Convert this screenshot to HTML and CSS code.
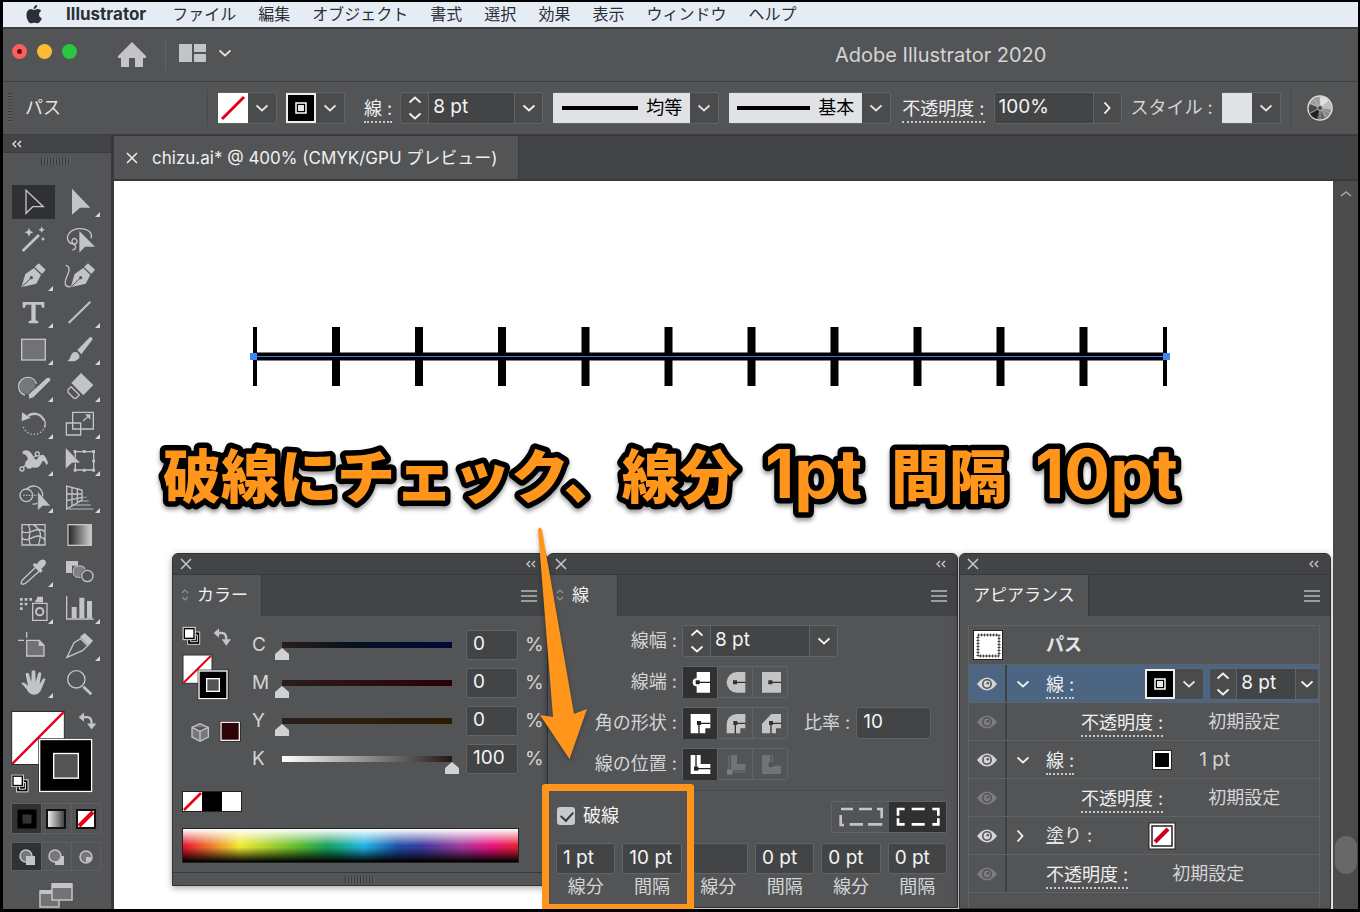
FILE: index.html
```html
<!DOCTYPE html>
<html lang="ja">
<head>
<meta charset="utf-8">
<title>Adobe Illustrator 2020</title>
<link rel="stylesheet" href="styles.css">
</head>
<body>
<svg class="defs" aria-hidden="true">
  <defs>
    <linearGradient id="fade"><stop offset="0" stop-color="#222"/><stop offset="1" stop-color="#d0d0d0"/></linearGradient>
    <linearGradient id="fade-light"><stop offset="0" stop-color="#f4f4f4"/><stop offset="1" stop-color="#3a3a3a"/></linearGradient>
    <symbol id="down" viewBox="0 0 12 8"><path d="M.5 1.500L6 6.500L11.500 1.500" fill="none" stroke="currentColor" stroke-width="1.800"/></symbol>
    <symbol id="right" viewBox="0 0 8 12"><path d="M1.500 .5L6.500 6L1.500 11.500" fill="none" stroke="currentColor" stroke-width="1.800"/></symbol>
    <symbol id="steps" viewBox="0 0 14 24"><path d="M1.500 6.500L7 1.500L12.500 6.500M1.500 17.500L7 22.500L12.500 17.500" fill="none" stroke="currentColor" stroke-width="1.800"/></symbol>
    <symbol id="close" viewBox="0 0 12 12"><path d="M1 1L11 11M11 1L1 11" fill="none" stroke="currentColor" stroke-width="1.5"/></symbol>
    <symbol id="collapse" viewBox="0 0 10 8"><path d="M4 1L1 4L4 7M9 1L6 4L9 7" fill="none" stroke="currentColor" stroke-width="1.4"/></symbol>
    <symbol id="lines" viewBox="0 0 16 12"><path d="M0 1H16M0 6H16M0 11H16" stroke="currentColor" stroke-width="1.6"/></symbol>
    <symbol id="updown" viewBox="0 0 8 12"><path d="M1 4L4 1L7 4M1 8L4 11L7 8" fill="none" stroke="currentColor" stroke-width="1.2"/></symbol>
    <symbol id="eye" viewBox="0 0 20 14"><path d="M0 7Q10 -6 20 7Q10 20 0 7Z" fill="currentColor"/><circle cx="10" cy="7" r="5" fill="#535456"/><circle cx="10" cy="7" r="3.4" fill="currentColor"/><circle cx="10.800" cy="6.200" r="1.300" fill="#535456"/></symbol>
    <symbol id="swatch-none" viewBox="0 0 30 30"><rect width="30" height="30" fill="#fff"/><path d="M4 26L26 4" stroke="#e60012" stroke-width="3"/></symbol>
    <symbol id="swatch-line" viewBox="0 0 30 30"><rect x="1" y="1" width="28" height="28" fill="#000" stroke="#eee" stroke-width="2"/><rect x="10" y="10" width="10" height="10" fill="#000" stroke="#fff" stroke-width="1.500"/><rect x="12" y="12" width="6" height="6" fill="#e8e8e8"/></symbol>
  </defs>
</svg>

<div class="app">
  <nav class="menubar">
    <svg class="apple" viewBox="0 0 48 58"><path d="M24 15C29 15 31 12 36 12C41 12 44 15 46 18C36 24 38 37 48 40C46 48 40 56 35 56C31 56 29 54 25 54C21 54 19 56 15 56C9 56 1 43 1 31C1 19 8 13 14 13C18 13 21 15 24 15ZM23 12C22 6 27 0 34 0C34 7 29 12 23 12Z" fill="#2c2f36"/></svg>
    <b>Illustrator</b>
    <span>ファイル</span><span>編集</span><span>オブジェクト</span><span>書式</span><span>選択</span><span>効果</span><span>表示</span><span>ウィンドウ</span><span>ヘルプ</span>
  </nav>

  <header class="titlebar">
    <div class="lights"><i class="red"></i><i class="yellow"></i><i class="green"></i></div>
    <button class="home" aria-label="ホーム"><svg width="28" height="26" viewBox="0 0 28 26"><path d="M14 0L28 14V16H25V25H17V16H11V25H3V16H0V14Z" fill="#c3c4c6"/></svg></button>
    <button class="arrange" aria-label="ドキュメントレイアウト"><svg width="27" height="18" viewBox="0 0 27 18"><path d="M0 0H13V18H0ZM15 0H27V8H15ZM15 10H27V18H15Z" fill="#c3c4c6"/></svg><svg width="12" height="8"><use href="#down"/></svg></button>
    <h1>Adobe Illustrator 2020</h1>
  </header>

  <div class="controlbar">
    <i class="grip-v"></i>
    <span class="object">パス</span>
    <i class="rule"></i>
    <button class="swatch-dd" aria-label="塗り"><svg width="30" height="30"><use href="#swatch-none"/></svg><span><svg width="12" height="8"><use href="#down"/></svg></span></button>
    <button class="swatch-dd second" aria-label="線"><svg width="30" height="30"><use href="#swatch-line"/></svg><span><svg width="12" height="8"><use href="#down"/></svg></span></button>
    <label class="dotted stroke-label" for="bar-stroke">線 :</label>
    <div class="combo bar-width"><button aria-label="増減"><svg width="14" height="24"><use href="#steps"/></svg></button><input id="bar-stroke" value="8 pt"><button aria-label="線幅の一覧"><svg width="12" height="8"><use href="#down"/></svg></button></div>
    <div class="profile wide"><div class="light"><i></i><select aria-label="可変線幅プロファイル"><option>均等</option></select></div><span><svg width="12" height="8"><use href="#down"/></svg></span></div>
    <div class="profile"><div class="light"><i></i><select aria-label="ブラシ定義"><option>基本</option></select></div><span><svg width="12" height="8"><use href="#down"/></svg></span></div>
    <label class="dotted opacity-label" for="bar-opacity">不透明度 :</label>
    <div class="combo bar-opacity"><input id="bar-opacity" value="100%"><button aria-label="不透明度の一覧"><svg width="8" height="12"><use href="#right"/></svg></button></div>
    <span class="style-label">スタイル :</span>
    <button class="swatch-dd" aria-label="スタイル"><svg width="30" height="30"><rect width="30" height="30" fill="#e1e2e5"/></svg><span><svg width="12" height="8"><use href="#down"/></svg></span></button>
    <i class="rule style-rule"></i>
    <button class="recolor" aria-label="オブジェクトを再配色"><svg width="26" height="26" viewBox="0 0 26 26"><circle cx="13" cy="13" r="12" fill="#969696" stroke="#ddd" stroke-width="1.500"/><path d="M13 13L13 2A11 11 0 0 1 22 6Z" fill="#e0e0e0"/><path d="M13 13L22 6A11 11 0 0 1 24 15Z" fill="#bcbcbc"/><path d="M13 13L24 15A11 11 0 0 1 18 23Z" fill="#8a8a8a"/><path d="M13 13L18 23A11 11 0 0 1 10 24Z" fill="#626262"/><path d="M13 13L10 24A11 11 0 0 1 3 19Z" fill="#222"/><path d="M13 13L3 19A11 11 0 0 1 3 9Z" fill="#484848"/><path d="M13 13L3 9A11 11 0 0 1 13 2Z" fill="#9c9c9c"/><path d="M13 2V24M3 8L23 18M3 18L23 8M7 4L19 22" stroke="#c8c8c8" stroke-width=".6"/><circle cx="13" cy="13" r="2.500" fill="#444" stroke="#bbb"/></svg></button>
  </div>

  <div class="main">
    <aside class="toolbar">
      <div class="tool-head"><svg width="10" height="8"><use href="#collapse"/></svg></div>
      <i class="grip-h"></i>
      <div class="tools">
        <button class="on" aria-label="選択"><svg viewBox="30 161 138 111"><path class="l" d="M78 183V252L98 232H130Z"/></svg></button>
        <button class="more" aria-label="ダイレクト選択"><svg viewBox="171 161 138 111"><path class="f" d="M216 178V256L240 235H271Z"/></svg></button>
        <button aria-label="自動選択"><svg viewBox="30 271 138 111"><path class="l" stroke-width="8" d="M68 364L117 316"/><path class="f" d="M87 294L91 304L100 308L91 312L87 321L83 312L74 308L83 304ZM125 290L128 297L135 300L128 303L125 310L122 303L115 300L122 297ZM129 321L131 326L136 328L131 330L129 335L127 330L122 328L127 326Z"/></svg></button>
        <button aria-label="なげなわ"><svg viewBox="171 271 138 111"><path class="l" d="M273 326C280 306 258 295 235 297C210 300 198 318 204 332C210 346 230 348 231 335C231 323 215 324 216 336C217 345 229 344 227 353C226 359 220 361 217 360"/><path class="f" d="M238 304V369L255 351H285Z"/></svg></button>
        <button class="more" aria-label="ペン"><svg viewBox="30 382 138 111"><path class="f" d="M64 473L76 433L102 415L123 436L109 462Z"/><path class="f" d="M104 412L116 401L137 420L126 433Z"/><path class="k" d="M66 471L92 446"/><circle cx="94" cy="444" r="5" fill="#535456"/></svg></button>
        <button aria-label="曲線"><svg viewBox="171 382 138 111"><path class="f" d="M212 473L224 433L250 415L271 436L257 462Z"/><path class="f" d="M252 412L264 401L285 420L274 433Z"/><path class="k" d="M214 471L240 446"/><circle cx="242" cy="444" r="5" fill="#535456"/><path class="l" d="M197 407C214 410 206 430 200 442C192 461 194 473 212 471"/></svg></button>
        <button class="more" aria-label="文字"><svg viewBox="30 492 138 111"><path class="f" d="M68 516H133V533H126L123 524H107V571L115 574V580H86V574L94 571V524H78L75 533H68Z"/></svg></button>
        <button class="more" aria-label="直線"><svg viewBox="171 492 138 111"><path class="l" stroke-width="6" d="M206 579L271 515"/></svg></button>
        <button class="more" aria-label="長方形"><svg viewBox="30 603 138 111"><rect class="g" x="65" y="628" width="71" height="62"/></svg></button>
        <button class="more" aria-label="ブラシ"><svg viewBox="171 603 138 111"><path class="f" d="M232 660L267 624Q278 616 277 629L244 673ZM228 666Q241 672 238 683Q230 697 202 693Q211 688 213 676Q218 664 228 666Z"/></svg></button>
        <button class="more" aria-label="Shaper"><svg viewBox="30 713 138 111"><circle cx="82" cy="767" r="23" fill="#77787a"/><path class="l" d="M75 794A27 27 0 1 1 109 761"/><path class="f" stroke="#535456" stroke-width="3" d="M87 807L84 793L140 742Q151 738 153 750L100 802Z"/></svg></button>
        <button class="more" aria-label="消しゴム"><svg viewBox="171 713 138 111"><path class="f" d="M243 728L280 764L250 795L214 758Z"/><path class="l" d="M213 769L238 794L228 804H222L204 786V778Z"/></svg></button>
        <button class="more" aria-label="回転"><svg viewBox="30 14 138 111"><path class="l" stroke-width="7" d="M84 46C104 34 124 42 132 60"/><path class="l" d="M130 54Q140 68 133 82"/><path class="f" d="M66 36L92 52L65 63Z"/><path class="l" stroke-dasharray="4 6" d="M70 80A34 34 0 0 0 132 84"/></svg></button>
        <button class="more" aria-label="拡大・縮小"><svg viewBox="171 14 138 111"><path class="l" d="M199 68H242V104H199ZM218 36H280V86H218Z"/><path class="l" d="M249 62L266 47"/><path class="f" d="M255 42H271V58Z"/></svg></button>
        <button class="more" aria-label="線幅"><svg viewBox="30 124 138 111"><path class="f" d="M68 152Q88 140 100 168Q108 186 116 168Q134 150 144 188L140 194Q130 172 124 188Q116 206 98 200Q84 210 78 198Q70 186 84 176Q80 160 68 160Z"/><path class="k" d="M74 197L106 166"/><path class="l" stroke-width="3" d="M70 200L108 164"/><circle class="l" cx="66" cy="205" r="6"/><circle class="l" cx="112" cy="160" r="6"/></svg></button>
        <button class="more" aria-label="自由変形"><svg viewBox="171 124 138 111"><path class="l" d="M226 153H281V208H226Z"/><path class="f" d="M249 148H257V157H249ZM277 148H285V157H277ZM277 177H285V185H277ZM277 204H285V213H277ZM249 204H257V213H249ZM221 204H229V213H221ZM221 148H229V157H221Z"/><path class="f" stroke="#535456" stroke-width="2" d="M196 140V206L216 187H242Z"/></svg></button>
        <button class="more" aria-label="シェイプ形成"><svg viewBox="30 235 138 111"><circle class="l" cx="79" cy="284" r="19"/><path class="l" d="M80 266A27 27 0 1 1 98 310"/><path class="l" stroke-dasharray="4 4" d="M70 284H112"/><path class="f" stroke="#535456" stroke-width="2" d="M113 272V330L128 316H152Z"/></svg></button>
        <button class="more" aria-label="遠近グリッド"><svg viewBox="171 235 138 111"><path class="l" d="M200 256V325L246 298V268ZM200 280L246 280M200 300L246 290M216 260V316M232 264V306"/><path class="l" opacity=".6" stroke-width="3" d="M244 290H260M236 301H266M222 313H272M206 325H280"/></svg></button>
        <button aria-label="メッシュ"><svg viewBox="30 345 138 111"><path class="l" d="M66 371H135V432H66ZM66 392C86 406 110 372 135 392M66 412C90 430 108 384 135 418M84 371C100 392 78 410 92 432M100 371C134 394 118 412 116 432"/></svg></button>
        <button aria-label="グラデーション"><svg viewBox="171 345 138 111"><rect x="204" y="371" width="70" height="62" fill="url(#fade)" stroke="#c3c4c6" stroke-width="4"/></svg></button>
        <button class="more" aria-label="スポイト"><svg viewBox="30 456 138 111"><path class="l" d="M107 499L68 536Q60 548 66 549Q72 552 84 541L119 509Z"/><path class="f" d="M98 492L104 486L110 490L118 480Q126 472 135 478Q142 488 132 496L124 504L128 509L121 516Z"/></svg></button>
        <button aria-label="ブレンド"><svg viewBox="171 456 138 111"><path class="f" d="M198 480H234V494H216V516H198Z"/><rect x="220" y="495" width="36" height="34" rx="13" fill="#808183" stroke="#c3c4c6" stroke-width="3"/><circle cx="262" cy="525" r="21" fill="#535456"/><circle class="l" cx="262" cy="525" r="17"/></svg></button>
        <button class="more" aria-label="シンボルスプレー"><svg viewBox="30 567 138 111"><path class="l" d="M98 607H141V658H98Z"/><circle class="l" stroke-width="6" cx="119" cy="632" r="11"/><path class="f" d="M106 604V598L111 594V587H129V604ZM60 591H68V599H60ZM74 591H82V599H74ZM88 591H96V599H88ZM60 605H68V613H60ZM74 605H82V613H74ZM60 619H68V627H60Z"/></svg></button>
        <button class="more" aria-label="棒グラフ"><svg viewBox="171 567 138 111"><path class="l" d="M200 586V654H281"/><path class="f" d="M215 618H230V652H215ZM238 590H253V652H238ZM261 600H276V652H261Z"/></svg></button>
        <button aria-label="アートボード"><svg viewBox="30 677 138 111"><path class="g" d="M80 717H118L132 732V764H80Z"/><path class="f" d="M116 717L133 734H116Z"/><path class="l" d="M54 717H72M80 692V709"/></svg></button>
        <button class="more" aria-label="スライス"><svg viewBox="171 677 138 111"><path class="l" d="M201 768L222 724L242 712L263 733L247 748Z"/><path class="f" d="M240 706L254 695L279 718L266 733Z"/></svg></button>
        <button class="more" aria-label="手のひら"><svg viewBox="30 788 138 111"><path class="f" d="M64 846Q70 840 78 848L84 854L77 818Q82 810 87 818L94 842L95 810Q101 803 106 810L107 842L115 814Q121 810 124 817L119 848L129 832Q136 828 136 835L122 868Q114 881 100 880Q86 878 80 864Z"/></svg></button>
        <button aria-label="ズーム"><svg viewBox="171 788 138 111"><circle class="l" cx="229" cy="834" r="26"/><path class="l" stroke-width="8" d="M250 856L274 879"/></svg></button>
      </div>
      <svg class="fillstroke" viewBox="24 235 282 260">
        <rect x="35" y="245" width="158" height="159" fill="#fff" stroke="#2c2d2f" stroke-width="3"/><path d="M37 402L191 247" stroke="#e60012" stroke-width="7"/>
        <rect x="115" y="325" width="163" height="163" fill="#2c2d2f"/><rect x="119" y="329" width="156" height="156" fill="#000" stroke="#fff" stroke-width="4"/><rect x="161" y="371" width="74" height="74" fill="#535456" stroke="#fff" stroke-width="4"/>
        <path d="M250 262H262Q275 262 275 282" fill="none" stroke="#c3c4c6" stroke-width="7"/><path class="f" d="M236 262L252 248V276ZM261 281H289L275 299Z"/>
        <rect x="50" y="450" width="34" height="36" fill="#000" stroke="#ddd" stroke-width="3"/><rect x="36" y="436" width="34" height="34" fill="#fff" stroke="#ddd" stroke-width="3"/><rect x="39" y="439" width="28" height="28" fill="#fff" stroke="#000" stroke-width="4"/><path d="M70 458H76V478H58V471" fill="none" stroke="#fff" stroke-width="3"/>
      </svg>
      <div class="modes">
        <button class="on" aria-label="カラー"><svg width="20" height="20"><rect x="3" y="3" width="14" height="14" fill="#333436" stroke="#000" stroke-width="5"/></svg></button>
        <button aria-label="グラデーション"><svg width="20" height="20"><rect x="1" y="1" width="18" height="18" fill="url(#fade-light)" stroke="#111" stroke-width="2"/></svg></button>
        <button aria-label="なし"><svg width="20" height="20"><rect x="1" y="1" width="18" height="18" fill="#fff" stroke="#111" stroke-width="2"/><path d="M3 17L17 3" stroke="#e60012" stroke-width="4"/></svg></button>
      </div>
      <div class="modes draw">
        <button class="on" aria-label="標準描画"><svg width="18" height="18"><circle cx="8" cy="8" r="6" fill="#77787a" stroke="#c3c4c6" stroke-width="1.500"/><path class="f" d="M8 8H17V17H8Z"/></svg></button>
        <button aria-label="背面描画"><svg width="18" height="18"><path class="f" d="M8 8H17V17H8Z"/><circle cx="8" cy="8" r="6" fill="#77787a" stroke="#c3c4c6" stroke-width="1.500"/></svg></button>
        <button aria-label="内側描画"><svg width="18" height="18"><circle cx="9" cy="9" r="6" fill="#77787a" stroke="#c3c4c6" stroke-width="1.500"/><path class="f" d="M9 9H14Q14 14 9 14Z"/></svg></button>
      </div>
      <button class="screen" aria-label="スクリーンモード"><svg width="34" height="26"><path d="M1 8H20V24H1Z" fill="#717274" stroke="#c3c4c6" stroke-width="1.500"/><path d="M1 7H20V11H1Z" fill="#c3c4c6"/><path d="M13 1H33V17H13Z" fill="#717274" stroke="#c3c4c6" stroke-width="1.500"/><path d="M13 0H33V5H13Z" fill="#c3c4c6"/></svg></button>
    </aside>

    <section class="document">
      <div class="tabs"><div class="tab"><button aria-label="閉じる"><svg width="12" height="12"><use href="#close"/></svg></button><span>chizu.ai* @ 400% (CMYK/GPU プレビュー)</span></div></div>
      <div class="view">
        <div class="canvas">
          <svg class="rail" width="920" height="60" viewBox="250 327 920 60">
            <path d="M255 356.500H1165" stroke="#000" stroke-width="8"/>
            <path d="M255 327V386M1165 327V386" stroke="#000" stroke-width="4"/>
            <path d="M336 327V386M419 327V386M502 327V386M585.500 327V386M668.500 327V386M751.500 327V386M834.500 327V386M917.500 327V386M1000.500 327V386M1083.500 327V386" stroke="#000" stroke-width="8"/>
            <path d="M255 356.500H1165" stroke="#3c78e6" stroke-width="1"/>
            <path d="M250 353H257V360H250ZM1163 353H1170V360H1163Z" fill="#4285f4"/>
          </svg>
          <svg class="caption" width="1040" height="90"><text x="6" y="61">破線にチェック、線分 <tspan class="latin" x="608">1pt</tspan> <tspan x="734">間隔</tspan> <tspan class="latin" x="878">10pt</tspan></text></svg>

          <section class="panel color">
            <div class="panel-head"><svg width="12" height="12"><use href="#close"/></svg><svg width="10" height="8"><use href="#collapse"/></svg></div>
            <div class="panel-tabs"><h2><svg width="8" height="12"><use href="#updown"/></svg>カラー</h2><button aria-label="メニュー"><svg width="16" height="12"><use href="#lines"/></svg></button></div>
            <div class="color-body">
              <div class="mixer">
                <svg width="60" height="120" viewBox="48 236 180 360">
                  <rect x="65" y="257" width="36" height="37" fill="#000" stroke="#ccc" stroke-width="3"/><rect x="51" y="243" width="37" height="37" fill="#fff" stroke="#ccc" stroke-width="3"/><rect x="55" y="247" width="29" height="29" fill="#fff" stroke="#000" stroke-width="4"/><path d="M88 266H94V286H74V280" fill="none" stroke="#ddd" stroke-width="3"/>
                  <path d="M156 260H168Q181 260 181 280" fill="none" stroke="#c3c4c6" stroke-width="7"/><path class="f" d="M143 260L159 246V274ZM167 279H195L181 298Z"/>
                  <rect x="51" y="326" width="87" height="85" fill="#fff" stroke="#2c2d2f" stroke-width="3"/><path d="M53 409L135 328" stroke="#e60012" stroke-width="6"/>
                  <rect x="95" y="370" width="93" height="91" fill="#222"/><rect x="99" y="374" width="84" height="83" fill="#000" stroke="#fff" stroke-width="4"/><rect x="122" y="397" width="38" height="38" fill="#535456" stroke="#fff" stroke-width="4"/>
                  <path d="M78 543L102 532L127 543V572L102 585L78 572ZM78 543L102 555L127 543M102 555V585" fill="#77787a" stroke="#c3c4c6" stroke-width="4"/>
                  <rect x="161" y="524" width="63" height="62" fill="#222"/><rect x="165" y="528" width="55" height="54" fill="#300406" stroke="#eee" stroke-width="4"/>
                </svg>
                <div class="sliders">
                  <label for="c">C</label><input class="c" type="range" id="c" value="0"><input aria-label="C の値" value="0"><span>%</span>
                  <label for="m">M</label><input class="m" type="range" id="m" value="0"><input aria-label="M の値" value="0"><span>%</span>
                  <label for="y">Y</label><input class="y" type="range" id="y" value="0"><input aria-label="Y の値" value="0"><span>%</span>
                  <label for="k">K</label><input class="k" type="range" id="k" value="100"><input aria-label="K の値" value="100"><span>%</span>
                </div>
              </div>
              <svg class="chips" width="60" height="21" viewBox="0 0 60 21"><rect x=".5" y=".5" width="59" height="20" fill="#fff" stroke="#222"/><path d="M2 19L19 2" stroke="#e60012" stroke-width="2.500"/><rect x="20" y="1" width="20" height="19" fill="#000"/></svg>
              <div class="spectrum"></div>
            </div>
            <div class="panel-foot"><i class="grip-h"></i></div>
          </section>

          <section class="panel stroke">
            <div class="panel-head"><svg width="12" height="12"><use href="#close"/></svg><svg width="10" height="8"><use href="#collapse"/></svg></div>
            <div class="panel-tabs"><h2><svg width="8" height="12"><use href="#updown"/></svg>線</h2><button aria-label="メニュー"><svg width="16" height="12"><use href="#lines"/></svg></button></div>
            <div class="stroke-body">
              <div class="row"><label for="weight">線幅 :</label><div class="combo panel-width"><button aria-label="増減"><svg width="14" height="24"><use href="#steps"/></svg></button><input id="weight" value="8 pt"><button aria-label="線幅の一覧"><svg width="12" height="8"><use href="#down"/></svg></button></div></div>
              <div class="row"><span class="name">線端 :</span><div class="triple">
                <button class="on" aria-label="線端なし"><svg viewBox="444 366 99 93"><path d="M482 381H522V443H482V424A12 12 0 0 1 482 400Z" fill="#fff"/><path d="M484 412H523" stroke="#222" stroke-width="4"/><path d="M479 406H491V418H479Z" fill="#222"/></svg></button>
                <button aria-label="丸型線端"><svg viewBox="548 366 99 93"><path class="f" d="M627 381V443H602A31 31 0 0 1 602 381Z"/><path d="M597 412H628" stroke="#333" stroke-width="4"/><path d="M590 406H602V418H590Z" fill="#333"/></svg></button>
                <button aria-label="突出線端"><svg viewBox="652 366 99 93"><path class="f" d="M676 381H733V443H676Z"/><path d="M701 412H734" stroke="#333" stroke-width="4"/><path d="M695 406H707V418H695Z" fill="#333"/></svg></button>
              </div></div>
              <div class="row"><span class="name">角の形状 :</span><div class="triple">
                <button class="on" aria-label="マイター結合"><svg viewBox="444 489 99 93"><path d="M464 507H523V550H508V565H464Z" fill="#fff"/><path d="M523 535H489V566" fill="none" stroke="#222" stroke-width="4"/><path d="M483 528H495V540H483Z" fill="#222"/></svg></button>
                <button aria-label="ラウンド結合"><svg viewBox="548 489 99 93"><path class="f" d="M627 507V550H612V565H571V542Q571 507 606 507Z"/><path d="M628 535H597V566" fill="none" stroke="#333" stroke-width="4"/><path d="M591 528H603V540H591Z" fill="#333"/></svg></button>
                <button aria-label="ベベル結合"><svg viewBox="652 489 99 93"><path class="f" d="M733 507V550H718V565H676V536L704 507Z"/><path d="M734 535H703V566" fill="none" stroke="#333" stroke-width="4"/><path d="M697 528H709V540H697Z" fill="#333"/></svg></button>
              </div><label class="ratio" for="ratio">比率 :</label><input class="field ratio-field" id="ratio" value="10"></div>
              <div class="row"><span class="name">線の位置 :</span><div class="triple">
                <button class="on" aria-label="中央"><svg viewBox="444 613 99 93"><path d="M464 631H494V658H523V688H464Z" fill="#fff"/><path d="M480 630V672H524" fill="none" stroke="#222" stroke-width="4"/><path d="M474 666H487V678H474Z" fill="#222"/></svg></button>
                <button aria-label="内側"><svg viewBox="548 613 99 93"><path d="M584 631H602V658H627V677H584Z" fill="#727375"/><path d="M578 631V682H627" fill="none" stroke="#727375" stroke-width="3"/><path d="M572 675H588V690H572Z" fill="#7c7d7f"/></svg></button>
                <button aria-label="外側"><svg viewBox="652 613 99 93"><path d="M676 631H708V658H733V688H676Z" fill="#727375"/><path d="M703 630V661H734" fill="none" stroke="#505153" stroke-width="4"/><path d="M696 654H709V667H696Z" fill="#505153"/></svg></button>
              </div></div>
              <div class="dash-head">
                <label><input type="checkbox" checked>破線</label>
                <div class="dash-modes">
                  <button aria-label="線分と間隔の正確な長さを保持"><svg width="44" height="20" viewBox="906 202 132 60"><path d="M912 208H948M966 208H1005M1020 208H1034V236M911 226V256H921M938 254H978M993 254H1036" fill="none" stroke="#c3c4c6" stroke-width="8"/></svg></button>
                  <button class="on" aria-label="コーナーに合わせて調整"><svg width="44" height="20" viewBox="1086 202 132 60"><path d="M1112 208H1092V228M1133 208H1172M1195 208H1213V228M1092 236V254H1112M1133 254H1172M1213 236V254H1195" fill="none" stroke="#fff" stroke-width="8"/></svg></button>
                </div>
              </div>
              <div class="dashes">
                <label><input value="1 pt">線分</label><label><input value="10 pt">間隔</label><label><input value="">線分</label><label><input value="0 pt">間隔</label><label><input value="0 pt">線分</label><label><input value="0 pt">間隔</label>
              </div>
            </div>
          </section>

          <section class="panel appearance">
            <div class="panel-head"><svg width="12" height="12"><use href="#close"/></svg><svg width="10" height="8"><use href="#collapse"/></svg></div>
            <div class="panel-tabs"><h2>アピアランス</h2><button aria-label="メニュー"><svg width="16" height="12"><use href="#lines"/></svg></button></div>
            <div class="list">
              <div class="item target"><svg width="30" height="30" viewBox="0 0 30 30"><rect x=".5" y=".5" width="29" height="29" fill="#fff" stroke="#222"/><rect x="5" y="5" width="21" height="21" fill="none" stroke="#444" stroke-width="1"/><rect x="5" y="5" width="21" height="21" fill="none" stroke="#444" stroke-width="3" stroke-dasharray="1 2"/></svg><b>パス</b></div>
              <div class="item selected"><button class="eye" aria-label="表示"><svg width="20" height="14"><use href="#eye"/></svg></button><button class="twist" aria-label="閉じる"><svg width="12" height="8"><use href="#down"/></svg></button><a class="dotted" href="#weight">線 :</a>
                <button class="swatch-dd push" aria-label="線のカラー"><svg width="30" height="30"><use href="#swatch-line"/></svg><span><svg width="12" height="8"><use href="#down"/></svg></span></button>
                <div class="combo list-width"><button aria-label="増減"><svg width="14" height="24"><use href="#steps"/></svg></button><input aria-label="線幅" value="8 pt"><button aria-label="線幅の一覧"><svg width="12" height="8"><use href="#down"/></svg></button></div></div>
              <div class="item sub"><button class="eye off" aria-label="表示"><svg width="20" height="14"><use href="#eye"/></svg></button><a class="dotted" href="#bar-opacity">不透明度 :</a><span class="value">初期設定</span></div>
              <div class="item"><button class="eye" aria-label="表示"><svg width="20" height="14"><use href="#eye"/></svg></button><button class="twist" aria-label="閉じる"><svg width="12" height="8"><use href="#down"/></svg></button><a class="dotted" href="#weight">線 :</a><svg class="chip" width="20" height="20"><rect width="20" height="20" fill="#222"/><rect x="2" y="2" width="16" height="16" fill="#000" stroke="#fff" stroke-width="2"/></svg><span class="pt">1 pt</span></div>
              <div class="item sub"><button class="eye off" aria-label="表示"><svg width="20" height="14"><use href="#eye"/></svg></button><a class="dotted" href="#bar-opacity">不透明度 :</a><span class="value">初期設定</span></div>
              <div class="item fill"><button class="eye" aria-label="表示"><svg width="20" height="14"><use href="#eye"/></svg></button><button class="twist" aria-label="開く"><svg width="8" height="12"><use href="#right"/></svg></button><span class="fill-name"><u>塗</u>り :</span><svg class="chip" width="28" height="28"><rect x="1" y="1" width="26" height="26" fill="#fff" stroke="#222"/><rect x="4" y="4" width="20" height="20" fill="#fff" stroke="#222" stroke-width="1.500"/><path d="M7 20L20 7" stroke="#c4001a" stroke-width="4"/></svg></div>
              <div class="item last"><button class="eye off" aria-label="表示"><svg width="20" height="14"><use href="#eye"/></svg></button><a class="dotted" href="#bar-opacity">不透明度 :</a><span class="value">初期設定</span></div>
            </div>
          </section>

          <svg class="arrow" width="60" height="240" viewBox="533 524 60 240"><path d="M538 530Q540 525 542 530L574 714L587 709L569.500 759L540 715L553 717Z" fill="#ff961b"/></svg>
          <div class="highlight"></div>
        </div>
        <div class="scroll"><svg width="12" height="8" viewBox="0 0 12 8"><path d="M1 6L6 2L11 6" fill="none" stroke="#a8a9ab" stroke-width="1.500"/></svg><i></i></div>
      </div>
    </section>
  </div>
</div>
</body>
</html>
```
FILE: styles.css
```css
* { box-sizing: border-box; }
body { margin: 0; background: #000; color: #e4e4e5; font: 18px/26px "Inter", "Noto Sans CJK JP", sans-serif; }
button, input, select { font: inherit; color: inherit; margin: 0; padding: 0; border: 0; background: none; border-radius: 0; }
button { display: flex; align-items: center; justify-content: center; }
input { min-width: 0; outline: 0; }
svg { display: block; flex: none; }
i { display: block; flex: none; }
a { color: inherit; text-decoration: none; }
h1, h2, p { margin: 0; font-weight: 400; }
.defs { position: absolute; width: 0; height: 0; }
.f { fill: #c3c4c6; }
.l { fill: none; stroke: #c3c4c6; stroke-width: 4; }
.l[stroke-width="8"] { stroke-width: 8; }
.l[stroke-width="7"] { stroke-width: 7; }
.l[stroke-width="6"] { stroke-width: 6; }
.g { fill: #717274; stroke: #c3c4c6; stroke-width: 4; }
.k { fill: none; stroke: #535456; stroke-width: 3; }

.app { display: flex; flex-direction: column; min-height: 100vh; border: solid #000; border-width: 2px 2px 3px 3px; overflow: hidden; }

.menubar { display: flex; align-items: center; gap: 22px; height: 25px; padding: 0 0 1px 23px; background: #e6ecf4; color: #2c2f36; font-size: 16px; line-height: 24px; white-space: nowrap; }
.menubar b { margin-right: 4px; font-size: 17px; }
.apple { width: 16px; height: 19px; margin-right: 2px; }

.titlebar { display: flex; align-items: center; height: 55px; background: #535456; border-top: 2px solid #3c3d3f; border-bottom: 1px solid #3c3d3f; }
.lights { display: flex; gap: 10px; margin: 0 0 7px 9px; }
.lights i { width: 15px; height: 15px; border-radius: 50%; }
.red { background: radial-gradient(circle, #5c0d0a 2px, #fb5f57 3px); }
.yellow { background: #fdbb2f; }
.green { background: #28c840; }
.home { margin-left: 41px; }
.arrange { gap: 13px; height: 31px; margin-left: 19px; padding: 0 12px 4px 13px; border-left: 1px solid #626365; }
.titlebar h1 { margin-left: 592px; font-size: 20px; color: #d4d5d6; white-space: nowrap; }

.controlbar { display: flex; align-items: center; height: 53px; background: #535456; border-bottom: 1px solid #3c3d3f; white-space: nowrap; }
.grip-v { width: 4px; height: 30px; margin: 0 13px 0 5px; background: repeating-linear-gradient(#3a3b3d 0 1px, #5a5b5d 1px 3px); }
.object { width: 182px; }
.rule { width: 1px; height: 38px; background: #48494b; margin-right: 10px; }
.swatch-dd { height: 32px; border: 1px solid #626365; border-left: 0; border-radius: 3px; background: #4a4b4d; }
.swatch-dd > span { display: flex; justify-content: center; width: 28px; }
.swatch-dd.second { margin-left: 9px; }
.dotted { line-height: 24px; border-bottom: 2px dotted #c8c8c9; white-space: nowrap; color: #f0f0f0; }
.stroke-label { margin: 4px 8px 0 19px; }
.combo { display: flex; height: 32px; border: 1px solid #626365; border-radius: 3px; background: #4a4b4d; color: #f4f4f4; }
.combo button { width: 27px; flex: none; }
.combo input { flex: 1; width: 0; padding: 0 5px 2px 4px; font-size: 19px; background: #434446; border: solid #626365; border-width: 0 1px; }
.bar-width { width: 143px; }
.profile { display: flex; align-items: center; height: 32px; margin-left: 10px; border: 1px solid #626365; border-left: 0; border-radius: 3px; background: #4a4b4d; }
.profile > span { width: 28px; display: flex; justify-content: center; }
.light { display: flex; align-items: center; height: 30px; gap: 8px; padding: 0 8px; background: #e1e2e5; color: #000; }
.light i { width: 73px; height: 4px; background: #000; }
.wide .light i { width: 76px; }
.light select { appearance: none; width: 36px; height: 30px; }
.wide .light { padding-left: 9px; }
.opacity-label { margin: 4px 9px 0 11px; }
.bar-opacity { width: 128px; }
.bar-opacity input { border-left: 0; }
.style-label { margin: 0 9px; color: #d4d5d6; }
.style-rule { margin: 0 16px 0 9px; }

.main { display: flex; flex: 1; min-height: 0; }
.toolbar { width: 111px; flex: none; background: #535456; border-right: 3px solid #39393b; }
.tool-head { display: flex; align-items: center; height: 18px; padding-left: 9px; background: #434446; border-bottom: 1px solid #3a3b3d; }
.grip-h { width: 30px; height: 7px; background: repeating-linear-gradient(90deg, #38393b 0 1px, #5a5b5d 1px 3px); }
.toolbar > .grip-h { margin: 5px 0 18px 38px; }
.tools { display: grid; grid-template-columns: 46px 46px; column-gap: 1px; margin-left: 7px; }
.tools button { position: relative; height: 37px; }
.tools svg { width: 46px; height: 37px; }
.tools .on { background: linear-gradient(#303133, #303133) center / 43px 34px no-repeat; }
.more::after { content: ""; position: absolute; right: 3px; bottom: 3px; width: 5px; height: 5px; background: #d4d5d6; clip-path: polygon(100% 0, 100% 100%, 0 100%); }
.fillstroke { width: 94px; height: 87px; margin: 7px 0 0 5px; }
.modes { display: grid; grid-template-columns: repeat(3, 1fr); width: 90px; height: 31px; margin: 8px 0 0 8px; border: 1px solid #5e5f61; }
.modes button + button { border-left: 1px solid #5e5f61; }
.modes .on { background: #303133; }
.modes.draw { height: 29px; }
.screen { margin: 12px 0 0 36px; }

.document { display: flex; flex-direction: column; flex: 1; min-width: 0; }
.tabs { display: flex; height: 46px; background: #434446; border-bottom: 2px solid #39393b; border-top: 1px solid #39393b; }
.tab { display: flex; align-items: center; gap: 14px; padding: 0 20px 0 12px; background: #535456; border-right: 1px solid #3a3b3d; font-size: 17px; color: #f0f0f0; white-space: nowrap; }
.view { display: flex; flex: 1; }
.canvas { position: relative; flex: 1; background: #fff; overflow: hidden; }
.scroll { display: flex; flex-direction: column; align-items: center; justify-content: space-between; width: 25px; padding: 9px 0 35px; background: #4a4b4d; }
.scroll i { width: 22px; height: 38px; border-radius: 11px; background: #67686a; }

.rail { position: absolute; left: 136px; top: 146px; }
.caption { position: absolute; left: 43px; top: 256px; overflow: visible; font-size: 58px; font-weight: 900; fill: #ff961b; stroke: #000; stroke-width: 11px; stroke-linejoin: round; paint-order: stroke fill; filter: drop-shadow(0 3px 2px rgba(0, 0, 0, .4)); }
.caption .latin { font-size: 68px; font-weight: 700; }
.arrow { position: absolute; left: 419px; top: 343px; filter: drop-shadow(0 2px 2px rgba(0, 0, 0, .3)); }
.highlight { position: absolute; left: 428px; bottom: -2px; width: 152px; height: 127px; border: 7px solid #ff961b; border-radius: 3px; }

.panel { position: absolute; top: 372px; background: #535456; border: 1px solid #303133; border-radius: 6px 6px 0 0; box-shadow: 0 2px 7px rgba(0, 0, 0, .35); overflow: hidden; }
.panel-head { display: flex; align-items: center; justify-content: space-between; height: 21px; padding: 0 11px 0 7px; background: #434446; border-bottom: 1px solid #38393b; color: #c8c9ca; }
.panel-tabs { display: flex; justify-content: space-between; height: 41px; background: #434446; }
.panel-tabs h2 { display: flex; align-items: center; gap: 8px; padding: 0 13px 2px 8px; background: #535456; font-size: 17px; color: #f0f0f0; border-right: 1px solid #38393b; }
.panel-tabs h2 svg { color: #909193; }
.panel-tabs button { margin-right: 10px; color: #b8b9bb; }
.color { left: 58px; width: 376px; }
.stroke { left: 433px; width: 411px; bottom: 1px; }
.stroke h2 { padding-right: 28px; }
.appearance { left: 845px; width: 372px; bottom: 0; }
.appearance h2 { padding: 0 13px 2px; }

.color-body { padding: 9px 6px 9px 9px; }
.mixer { display: flex; gap: 10px; }
.mixer > svg { margin-bottom: 30px; }
.sliders { display: grid; grid-template-columns: 16px 184px 52px 17px; grid-auto-rows: 30px; gap: 8px 7px; margin: 5px 0 0; align-items: center; font-size: 19px; color: #d4d5d6; }
.sliders input:not([type]) { height: 30px; padding: 0 0 3px 6px; border: 1px solid #626365; border-radius: 2px; background: #434446; font-size: 19px; color: #f4f4f4; }
.sliders input[type=range] { appearance: none; width: 184px; height: 24px; background-position: center 9px; background-size: 170px 6px; background-repeat: no-repeat; }
.sliders input[type=range]::-webkit-slider-thumb { appearance: none; width: 14px; height: 12px; margin-top: 18px; background: #d0d1d3; clip-path: polygon(50% 0, 100% 50%, 100% 100%, 0 100%, 0 50%); }
.c { background-image: linear-gradient(90deg, #2a1e1b, #07121e 40%, #02083c); }
.m { background-image: linear-gradient(90deg, #2a1e1d, #2a0006); }
.y { background-image: linear-gradient(90deg, #2a1e1b, #2a1d00); }
.k[type=range] { background-image: linear-gradient(90deg, #fff, #777 60%, #231815); }
.chips { margin: 16px 0; }
.spectrum { width: 337px; height: 35px; border: 1px solid #222; background: linear-gradient(#fff, rgba(255, 255, 255, 0) 50%, rgba(0, 0, 0, 0) 55%, #000), linear-gradient(90deg, #e8122a, #f0ea30 17%, #62bb2c 34%, #16a05a 43%, #20b4e4 54%, #1d50a8 64%, #3a3a9c 71%, #a03a9c 83%, #e8107c 92%, #e5202c); }
.panel-foot { display: flex; align-items: center; justify-content: center; height: 13px; border-top: 1px solid #38393b; }

.stroke-body { padding: 9px 10px 0 8px; }
.row { display: flex; align-items: center; height: 32px; margin-bottom: 9px; white-space: nowrap; color: #d4d5d6; }
.row > :first-child { width: 121px; margin-right: 5px; text-align: right; }
.panel-width { width: 156px; }
.triple { display: grid; grid-template-columns: 34px 35px 35px; height: 32px; border: 1px solid #626365; border-radius: 2px; }
.triple button + button { border-left: 1px solid #626365; }
.triple svg { width: 33px; height: 31px; }
.on { background: #2f3032; }
.ratio { margin: 0 6px 0 16px; }
.field { height: 32px; padding: 0 6px 3px; border: 1px solid #626365; border-radius: 3px; background: #434446; font-size: 19px; color: #f4f4f4; }
.ratio-field { width: 75px; }
.dash-head { display: flex; justify-content: space-between; align-items: center; margin-top: 10px; padding-top: 10px; border-top: 1px solid #4a4b4d; color: #f4f4f4; }
.dash-head label { display: flex; align-items: center; gap: 8px; margin: 0 0 3px 1px; }
.dash-head input { appearance: none; width: 18px; height: 18px; border-radius: 3px; background: #c8c9cb; }
.dash-head input:checked::before { content: ""; display: block; width: 6px; height: 10px; margin: 2px 0 0 6px; border: solid #38393b; border-width: 0 2px 2px 0; transform: rotate(42deg); }
.dash-modes { display: flex; border: 1px solid #626365; border-radius: 2px; }
.dash-modes button { width: 57px; height: 30px; }
.dashes { display: grid; grid-template-columns: repeat(6, 1fr); gap: 7px; margin-top: 10px; }
.dashes label { display: flex; flex-direction: column; align-items: center; color: #d4d5d6; line-height: 26px; }
.dashes input { width: 100%; height: 31px; padding: 0 0 3px 6px; border: 1px solid #626365; border-radius: 2px; background: #434446; font-size: 19px; color: #f4f4f4; }

.list { height: 100%; margin: 9px 10px 0 8px; border: 1px solid #616264; }
.item { display: flex; align-items: center; height: 38px; border-bottom: 1px solid #616264; white-space: nowrap; }
.item .dotted { margin-top: 4px; }
.target { height: 39px; padding-left: 4px; }
.target b { margin-left: 43px; }
.selected { background: #4c6582; }
.eye { width: 38px; height: 37px; border-right: 2px solid #3f4042; color: #d4d5d6; flex: none; }
.eye.off { color: #7c7d7f; }
.twist { width: 32px; margin-right: 7px; color: #f0f0f0; }
.fill .twist { width: 26px; margin-right: 13px; }
.push { margin-left: 71px; }
.selected .swatch-dd, .selected .combo { border-color: #56687c; }
.list-width { flex: 1; margin-left: 5px; }
.list-width button { width: 26px; }
.list-width button:last-child { width: 22px; }
.sub .dotted { margin-left: 74px; }
.last .dotted { margin-left: 39px; }
.value { margin-left: 45px; color: #d4d5d6; }
.last .value { margin-left: 44px; }
.item .chip { margin-left: 78px; }
.pt { margin-left: 27px; font-size: 19px; color: #d4d5d6; }
.item.fill .chip { margin-left: 56px; }
```
